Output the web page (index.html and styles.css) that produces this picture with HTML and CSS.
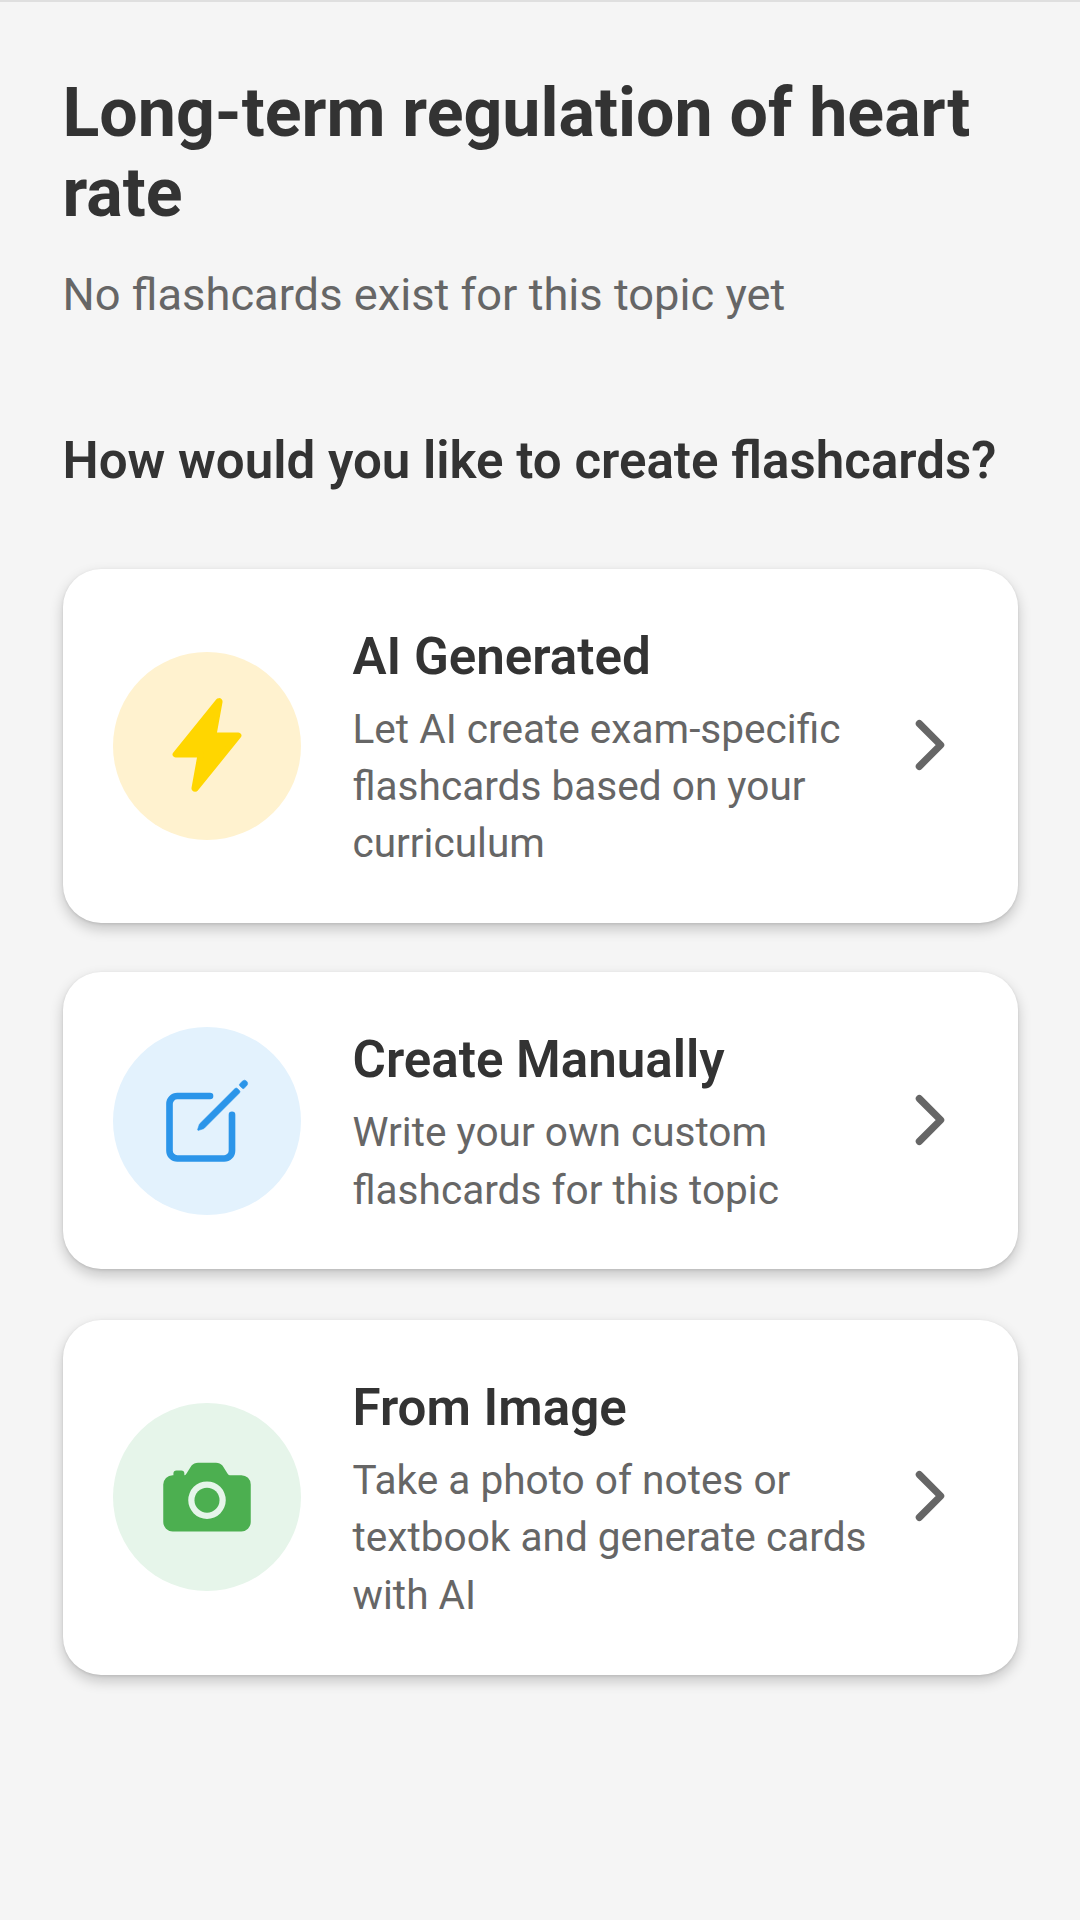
FILE: index.html
```html
<!DOCTYPE html>
<html lang="en">
<head>
<meta charset="utf-8">
<title>Create flashcards</title>
<link rel="stylesheet" href="styles.css">
</head>
<body>
<main class="page">
  <h1 class="title">Long-term regulation of heart rate</h1>
  <p class="subtitle">No flashcards exist for this topic yet</p>
  <h2 class="question">How would you like to create flashcards?</h2>
  <div class="options">
    <section class="card">
      <div class="badge badge-ai"><svg class="icon" viewBox="0 0 512 512"><path fill="#ffd600" d="M315.27 33 96 304h128l-31.51 173.23a2.36 2.36 0 0 0 2.33 2.77 2.36 2.36 0 0 0 1.89-.95L416 208H288l31.66-173.25a2.45 2.45 0 0 0-2.44-2.75 2.42 2.42 0 0 0-1.95 1z" stroke="#ffd600" stroke-width="32" stroke-linejoin="round"/></svg></div>
      <div class="copy">
        <h3 class="card-title">AI Generated</h3>
        <p class="text">Let AI create exam-specific flashcards based on your curriculum</p>
      </div>
      <svg class="chevron" viewBox="0 0 512 512"><path d="m184 112 144 144-144 144"/></svg>
    </section>
    <section class="card card-manual">
      <div class="badge badge-manual"><svg class="icon" viewBox="0 0 512 512"><path d="M384 224v184a40 40 0 0 1-40 40H104a40 40 0 0 1-40-40V168a40 40 0 0 1 40-40h167.48" fill="none" stroke="#2b95e9" stroke-linecap="round" stroke-linejoin="round" stroke-width="34"/><path fill="#2b95e9" stroke="#2b95e9" stroke-width="3" d="M459.94 53.25a16.06 16.06 0 0 0-23.22-.56L424.35 65a8 8 0 0 0 0 11.31l11.34 11.32a8 8 0 0 0 11.34 0l12.06-12c6.1-6.09 6.67-16.01.85-22.38zM399.34 90 218.82 270.2a9 9 0 0 0-2.31 3.93L208.16 299a3.91 3.91 0 0 0 4.86 4.86l24.85-8.35a9 9 0 0 0 3.93-2.31L422 112.66a9 9 0 0 0 0-12.66l-9.95-10a9 9 0 0 0-12.71 0z"/></svg></div>
      <div class="copy">
        <h3 class="card-title">Create Manually</h3>
        <p class="text">Write your own custom flashcards for this topic</p>
      </div>
      <svg class="chevron" viewBox="0 0 512 512"><path d="m184 112 144 144-144 144"/></svg>
    </section>
    <section class="card">
      <div class="badge badge-image"><svg class="icon" viewBox="0 0 512 512"><g fill="#4caf50"><circle cx="256" cy="272" r="64"/><path d="M432 144h-59c-3 0-6.72-1.94-9.62-5l-25.94-40.94a15.52 15.52 0 0 0-1.37-1.85C327.11 85.76 315 80 302 80h-92c-13 0-25.11 5.76-34.07 16.21a15.52 15.52 0 0 0-1.37 1.85l-25.94 41c-2.22 2.42-5.34 5-8.62 5v-8a16 16 0 0 0-16-16h-24a16 16 0 0 0-16 16v8h-4a48.05 48.05 0 0 0-48 48V384a48.05 48.05 0 0 0 48 48h352a48.05 48.05 0 0 0 48-48V192a48.05 48.05 0 0 0-48-48zM256 368a96 96 0 1 1 96-96 96.11 96.11 0 0 1-96 96z"/></g></svg></div>
      <div class="copy">
        <h3 class="card-title">From Image</h3>
        <p class="text">Take a photo of notes or textbook and generate cards with AI</p>
      </div>
      <svg class="chevron" viewBox="0 0 512 512"><path d="m184 112 144 144-144 144"/></svg>
    </section>
  </div>
</main>
</body>
</html>
```
FILE: styles.css
```css
* { box-sizing: border-box; margin: 0; padding: 0; }
body { background: #f5f5f5; font-family: Roboto, sans-serif; color: #333; }
.page { min-height: 1920px; padding: 71px 62px 0 62.5px; border-top: 2px solid #dfdfdf; }
.title { font-size: 68.1px; line-height: 80px; font-weight: 700; }
.subtitle { margin-top: 32px; font-size: 45.25px; line-height: 60px; color: #666; white-space: nowrap; }
.question { margin-top: 106px; font-size: 51.1px; line-height: 60px; font-weight: 600; white-space: nowrap; }
.options { display: flex; flex-direction: column; gap: 49px; margin-top: 77.5px; }
.card { display: flex; align-items: center; margin-left: .5px; padding: 51px 50px; background: #fff; border-radius: 38px; box-shadow: 0 6px 14px rgba(0,0,0,.2), 0 1px 3px rgba(0,0,0,.1); }
.card-manual { margin-bottom: 2px; padding-bottom: 50px; }
.badge { display: flex; flex: none; align-items: center; justify-content: center; width: 188px; height: 188px; border-radius: 50%; }
.badge-ai { background: #fff2cf; }
.badge-manual { background: #e3f2fd; }
.badge-image { background: #e6f5ea; }
.icon { width: 100px; height: 100px; margin-bottom: 1px; }
.copy { flex: 1; margin-left: 51.5px; padding-top: 4px; }
.card-title { font-size: 51.1px; line-height: 66px; font-weight: 600; }
.text { margin-top: 11px; font-size: 40.6px; line-height: 57.3px; color: #666; }
.chevron { flex: none; width: 76px; height: 76px; margin-bottom: 2px; fill: none; stroke: #666; stroke-width: 48; stroke-linecap: round; stroke-linejoin: round; }
```
